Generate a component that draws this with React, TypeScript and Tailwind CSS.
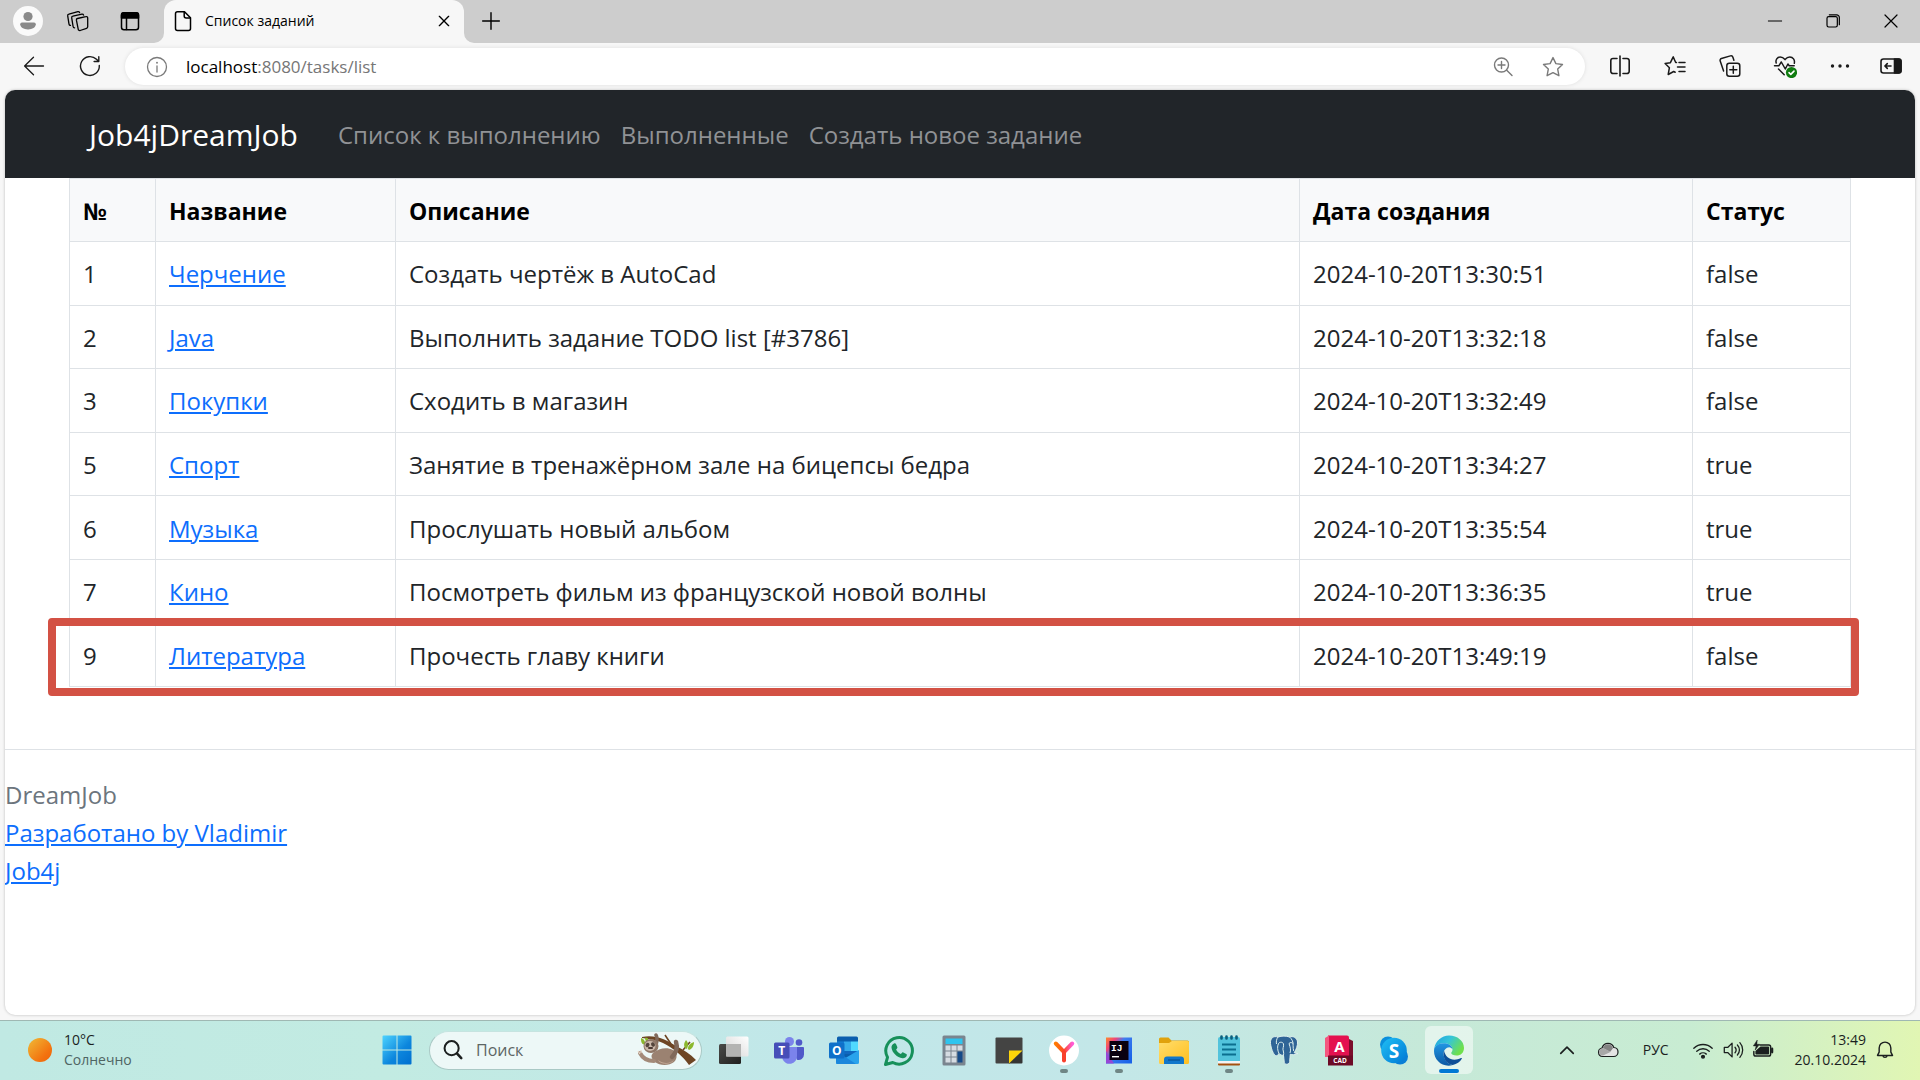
import type { ReactNode } from "react";

type Task = {
  id: number;
  title: string;
  description: string;
  created: string;
  done: boolean;
};

const TASKS: Task[] = [
  { id: 1, title: "Черчение", description: "Создать чертёж в AutoCad", created: "2024-10-20T13:30:51", done: false },
  { id: 2, title: "Java", description: "Выполнить задание TODO list [#3786]", created: "2024-10-20T13:32:18", done: false },
  { id: 3, title: "Покупки", description: "Сходить в магазин", created: "2024-10-20T13:32:49", done: false },
  { id: 5, title: "Спорт", description: "Занятие в тренажёрном зале на бицепсы бедра", created: "2024-10-20T13:34:27", done: true },
  { id: 6, title: "Музыка", description: "Прослушать новый альбом", created: "2024-10-20T13:35:54", done: true },
  { id: 7, title: "Кино", description: "Посмотреть фильм из французской новой волны", created: "2024-10-20T13:36:35", done: true },
  { id: 9, title: "Литература", description: "Прочесть главу книги", created: "2024-10-20T13:49:19", done: false },
];

function Line({ size = "size-6", width = 1.3, children }: { size?: string; width?: number; children: ReactNode }) {
  return (
    <svg
      viewBox="0 0 24 24"
      className={`${size} shrink-0`}
      fill="none"
      stroke="currentColor"
      strokeWidth={width}
      strokeLinecap="round"
      strokeLinejoin="round"
      aria-hidden="true"
    >
      {children}
    </svg>
  );
}

function ToolButton({ label, className = "w-[55px]", children }: { label: string; className?: string; children: ReactNode }) {
  return (
    <button type="button" aria-label={label} className={`${className} flex h-full shrink-0 items-center justify-center pb-0.5`}>
      {children}
    </button>
  );
}

function TitleBar() {
  return (
    <header className="flex h-[43px] bg-[#cdcdcd] text-black">
      <ToolButton label="Профиль" className="w-14">
        <svg viewBox="0 0 30 30" className="size-[30px]" aria-hidden="true">
          <circle cx="15" cy="15" r="15" fill="#fafafa" />
          <circle cx="15" cy="10.5" r="4.6" fill="#8a8a8a" />
          <path d="M9 16.5h12a1.8 1.8 0 0 1 1.8 1.8c0 3-3.4 5.2-7.8 5.2s-7.8-2.2-7.8-5.2A1.8 1.8 0 0 1 9 16.5z" fill="#8a8a8a" />
        </svg>
      </ToolButton>
      <ToolButton label="Рабочие области" className="w-11">
        <Line>
          <path d="M11.5 9.5l8.3-1.9a1.5 1.5 0 0 1 1.9 1.4v8.8a1.6 1.6 0 0 1-1.1 1.5l-6.5 2.2a1.5 1.5 0 0 1-1.9-1.3L10.4 11.2A1.5 1.5 0 0 1 11.5 9.5z" />
          <path d="M8.6 18.8a1.5 1.5 0 0 1-1.5-1.3L5.7 8.9a1.5 1.5 0 0 1 1.2-1.7l9-2.1a1.5 1.5 0 0 1 1.7 1" />
          <path d="M4.5 16.4a1.5 1.5 0 0 1-1.5-1.3L1.7 6.9a1.5 1.5 0 0 1 1.2-1.7l9-2.6a1.5 1.5 0 0 1 1.7 1" />
        </Line>
      </ToolButton>
      <ToolButton label="Меню вкладок" className="w-[60px]">
        <Line width={1.5}>
          <rect x="3.5" y="3.8" width="17" height="17" rx="2.5" />
          <path d="M3.5 9V6.3A2.5 2.5 0 0 1 6 3.8h12a2.5 2.5 0 0 1 2.5 2.5V9z" fill="currentColor" />
          <path d="M8.5 9v11.5" />
        </Line>
      </ToolButton>
      <div className="relative ml-1 flex w-[300px] items-center rounded-t-xl bg-[#f7f7f7] pr-2 pb-0.5 pl-[7px]">
        <svg viewBox="0 0 10 10" className="absolute bottom-0 -left-2.5 size-2.5" aria-hidden="true">
          <path d="M10 0v10H0A10 10 0 0 0 10 0z" fill="#f7f7f7" />
        </svg>
        <svg viewBox="0 0 10 10" className="absolute -right-2.5 bottom-0 size-2.5" aria-hidden="true">
          <path d="M0 0v10h10A10 10 0 0 1 0 0z" fill="#f7f7f7" />
        </svg>
        <Line width={1.5}>
          <path d="M6.5 2.7h7l6 6v10.8a2 2 0 0 1-2 2h-11a2 2 0 0 1-2-2V4.7a2 2 0 0 1 2-2z" />
          <path d="M13.2 2.9v4.2a2 2 0 0 0 2 2h4" />
        </Line>
        <span className="ml-2.5 flex-1 text-sm">Список заданий</span>
        <button type="button" aria-label="Закрыть вкладку" className="flex size-6 items-center justify-center">
          <Line size="size-4" width={2}>
            <path d="M5 5l14 14M19 5L5 19" />
          </Line>
        </button>
      </div>
      <ToolButton label="Новая вкладка" className="w-[54px]">
        <Line size="size-5" width={1.7}>
          <path d="M12 2v20M2 12h20" />
        </Line>
      </ToolButton>
      <div className="ml-auto flex">
        <ToolButton label="Свернуть" className="w-[58px]">
          <Line size="size-4" width={1.5}><path d="M2 12h20" /></Line>
        </ToolButton>
        <ToolButton label="Восстановить" className="w-[58px]">
          <Line size="size-4" width={1.8}>
            <rect x="3" y="5.5" width="15.5" height="15.5" rx="2.5" />
            <path d="M6.5 2.7h11a4 4 0 0 1 4 4v10.8" />
          </Line>
        </ToolButton>
        <ToolButton label="Закрыть" className="w-[58px]">
          <Line size="size-4" width={1.8}><path d="M3 3l18 18M21 3L3 21" /></Line>
        </ToolButton>
      </div>
    </header>
  );
}

function AddressBar() {
  return (
    <div className="flex h-[47px] items-center bg-[#f7f7f7] pr-[5px] pl-1.5 text-[#1a1a1a]">
      <ToolButton label="Назад" className="w-14">
        <Line><path d="M21.5 12H2.8M11.5 3.3L2.6 12l8.9 8.7" /></Line>
      </ToolButton>
      <ToolButton label="Обновить" className="w-14">
        <Line width={1.4}>
          <path d="M21.3 11.5a9.4 9.4 0 1 1-2.8-6.2L20.8 7.5M20.8 2.8v4.7h-4.7" />
        </Line>
      </ToolButton>
      <div className="mx-[7px] flex h-[37px] flex-1 items-center rounded-full bg-white pr-5 pl-5 text-[#7a7a7a] shadow-[0_0_4px_rgba(0,0,0,0.1)]">
        <Line width={1.3}>
          <circle cx="12" cy="12" r="9.5" />
          <path d="M12 11v6" />
          <path d="M12 7.6v.2" strokeWidth="1.8" />
        </Line>
        <a href="http://localhost:8080/tasks/list" className="ml-[17px] flex-1 text-[17px] leading-6 text-[#767676]">
          <span className="text-black">localhost</span>:8080/tasks/list
        </a>
        <button type="button" aria-label="Масштаб" className="mr-[26px]">
          <Line width={1.4}>
            <circle cx="10.5" cy="10" r="7" />
            <path d="M15.7 15.2l5.3 5.3M10.5 6.5v7M7 10h7" />
          </Line>
        </button>
        <button type="button" aria-label="Добавить в избранное">
          <Line width={1.4}>
            <path d="M12 2.6l2.9 6 6.6.9-4.8 4.6 1.2 6.6L12 17.6l-5.9 3.1 1.2-6.6-4.8-4.6 6.6-.9z" />
          </Line>
        </button>
      </div>
      <ToolButton label="Разделить экран">
        <Line width={1.6}>
          <path d="M9 4.5H5a2.2 2.2 0 0 0-2.2 2.2v10.6A2.2 2.2 0 0 0 5 19.5h4M15 4.5h4a2.2 2.2 0 0 1 2.2 2.2v10.6a2.2 2.2 0 0 1-2.2 2.2h-4M12 2v20" />
        </Line>
      </ToolButton>
      <ToolButton label="Избранное">
        <Line width={1.5}>
          <path d="M13.5 8.5h-.8L10.2 2.9 7.4 8.7l-5.3.8 4.3 4.2-1.2 6.8 5.5-3 1.5.7M16 8.5h6M14.5 13h7.5M16 17.5h6" />
        </Line>
      </ToolButton>
      <ToolButton label="Коллекции">
        <Line width={1.5}>
          <rect x="8.8" y="9.3" width="13" height="13" rx="2.5" />
          <path d="M15.3 12.3v7M11.8 15.8h7M5.6 17L2.2 7.1a2 2 0 0 1 1.2-2.6l9-2.6a2 2 0 0 1 2.5 1.3l1 3" />
        </Line>
      </ToolButton>
      <ToolButton label="Основные компоненты браузера">
        <Line width={1.5}>
          <path d="M3.2 9C2.3 5.8 4.2 3 7.2 3c2.2 0 3.6 1.2 4.8 2.6C13.2 4.2 14.6 3 16.8 3c3.2 0 5.3 2.9 4.5 6.2M1.5 11.8h4.3L8.3 8l4 7 2.6-5 1.3 1.800h5M5.5 15l5.7 5.8" />
          <circle cx="18.5" cy="18.5" r="5.6" fill="#107c10" stroke="none" />
          <path d="M16 18.7l1.8 1.7 3.2-3.3" stroke="#fff" strokeWidth="1.6" />
        </Line>
      </ToolButton>
      <ToolButton label="Настройки и другое">
        <svg viewBox="0 0 24 24" className="size-6" fill="currentColor" aria-hidden="true">
          <circle cx="4.5" cy="12" r="1.7" />
          <circle cx="12" cy="12" r="1.7" />
          <circle cx="19.5" cy="12" r="1.7" />
        </svg>
      </ToolButton>
      <ToolButton label="Боковая панель" className="w-12">
        <Line width={1.6}>
          <rect x="2" y="5" width="20" height="14" rx="2.5" />
          <path d="M15.5 5h4A2.5 2.5 0 0 1 22 7.5v9a2.5 2.5 0 0 1-2.5 2.5h-4z" fill="currentColor" />
          <path d="M12 12H6M8.3 9.6L5.9 12l2.4 2.4" />
        </Line>
      </ToolButton>
    </div>
  );
}

function Navbar() {
  return (
    <nav className="flex h-[88px] items-center bg-[#212529] pt-0.5 pl-[84px] text-2xl text-[#909295]">
      <a href="#home" className="mr-10 text-[30px] text-white">Job4jDreamJob</a>
      <div className="flex gap-5">
        <a href="#todo">Список к выполнению</a>
        <a href="#done">Выполненные</a>
        <a href="#create">Создать новое задание</a>
      </div>
    </nav>
  );
}

function TaskTable() {
  return (
    <div className="relative mx-16">
      <table className="h-[509px] w-full table-fixed border-collapse text-left text-2xl text-[#212529] [&_td]:border [&_td]:border-[#dee2e6] [&_td]:px-[13px] [&_td]:pt-0.5 [&_th]:border [&_th]:border-[#dee2e6] [&_th]:px-[13px] [&_th]:pt-0.5">
        <colgroup>
          <col className="w-[86px]" />
          <col className="w-[240px]" />
          <col />
          <col className="w-[393px]" />
          <col className="w-[158px]" />
        </colgroup>
        <thead className="bg-[#f8f9fa] text-[23px] leading-8 text-black">
          <tr className="h-[63px]">
            <th scope="col">№</th>
            <th scope="col">Название</th>
            <th scope="col">Описание</th>
            <th scope="col">Дата создания</th>
            <th scope="col">Статус</th>
          </tr>
        </thead>
        <tbody>
          {TASKS.map((task) => (
            <tr key={task.id}>
              <td>{task.id}</td>
              <td>
                <a href={`#task-${task.id}`} className="text-[#0d6efd] underline">{task.title}</a>
              </td>
              <td>{task.description}</td>
              <td>{task.created}</td>
              <td>{String(task.done)}</td>
            </tr>
          ))}
        </tbody>
      </table>
      <div className="pointer-events-none absolute -right-2 -bottom-[9px] -left-[21px] h-[78px] rounded-[4px] border-8 border-[#d35144]" />
    </div>
  );
}

function PageFooter() {
  return (
    <footer className="mt-[62px] border-t border-[#dee2e6] pt-[26px] text-2xl leading-[38px] text-[#0d6efd]">
      <p className="text-[#6c757d]">DreamJob</p>
      <p><a href="#author" className="underline">Разработано by Vladimir</a></p>
      <p><a href="#job4j" className="underline">Job4j</a></p>
    </footer>
  );
}

function Sloth() {
  return (
    <svg viewBox="0 0 60 34" className="h-[34px] w-[60px]" aria-hidden="true">
      <path d="M5 4C18 1 30 7 39 13c8 4 14 8 20 14l-7 5C46 23 36 15 26 10 18 6 10 6 5 5z" fill="#6d4524" />
      <path d="M28 2l6 9M46 17l7-8" stroke="#6d4524" strokeWidth="1.6" />
      <path d="M48 15c-2-4 0-6 1-8 3 3 2 6 1 9zM51 16c0-4 3-6 6-7 0 4-2 7-5 8zM4 5c3 1 5 4 4 7C4 11 4 8 4 5zM8 5c3-1 4 1 3 4-2 0-3-2-3-4z" fill="#8bb82e" />
      <path d="M16 20c6-5 14-6 20-3 4 3 5 8 1 12-5 4-14 4-19 0-3-3-5-6-2-9z" fill="#9b8271" />
      <path d="M21 27c5 4 12 4 16 0-3 5-14 5-16 0z" fill="#c5aa98" />
      <path d="M35 24c4-4 6-9 4-15" fill="none" stroke="#80695a" strokeWidth="4.5" strokeLinecap="round" />
      <path d="M19 12c1-4 2-7 0-10" fill="none" stroke="#80695a" strokeWidth="3.5" strokeLinecap="round" />
      <path d="M17 28C11 28 6 26 3 20" fill="none" stroke="#a38a79" strokeWidth="4" strokeLinecap="round" />
      <path d="M1 18l2 3M4 17l0 3" stroke="#e8dacb" strokeWidth="1.2" />
      <ellipse cx="14" cy="13" rx="7.5" ry="7" fill="#8f7767" />
      <ellipse cx="13" cy="13" rx="5.5" ry="5" fill="#cbb9ab" />
      <ellipse cx="10.5" cy="12" rx="1.8" ry="2.4" fill="#54453c" transform="rotate(30 10.5 12)" />
      <ellipse cx="16" cy="11.5" rx="1.8" ry="2.4" fill="#54453c" transform="rotate(-30 16 11.5)" />
      <path d="M12 15h3" stroke="#4a3a34" strokeWidth="2" strokeLinecap="round" />
    </svg>
  );
}

type AppEntry = { name: string; running?: boolean; active?: boolean; icon: ReactNode };

const GLYPH_FONT = "'Open Sans', sans-serif";

const APPS: AppEntry[] = [
  {
    name: "Представление задач",
    icon: (
      <>
        <defs>
          <linearGradient id="tvDark" x1="0" y1="0" x2="1" y2="1"><stop stopColor="#4a4a48" /><stop offset="1" stopColor="#20201f" /></linearGradient>
          <linearGradient id="tvLight" x1="1" y1="0" x2="0" y2="1"><stop stopColor="#fff" /><stop offset="1" stopColor="#d5d5d5" /></linearGradient>
        </defs>
        <rect x="1" y="9" width="22" height="20" rx="1.5" fill="url(#tvDark)" />
        <rect x="8" y="1.5" width="22.5" height="20" rx="1.5" fill="url(#tvLight)" />
        <rect x="8" y="9" width="15" height="12.5" fill="#b3b3b2" />
      </>
    ),
  },
  {
    name: "Microsoft Teams",
    icon: (
      <>
        <circle cx="26" cy="7.5" r="3.3" fill="#5059c9" />
        <path d="M19 12h11a1 1 0 0 1 1 1v6.5a5.5 5.5 0 0 1-7 5.3z" fill="#5059c9" />
        <circle cx="16.5" cy="6.5" r="4.5" fill="#7b83eb" />
        <path d="M10 12h14v9a7.5 7.5 0 0 1-14.5 3z" fill="#7b83eb" />
        <rect x="1" y="7.5" width="15.5" height="16" rx="1.5" fill="#464eb8" />
        <text x="8.7" y="20" textAnchor="middle" fontFamily={GLYPH_FONT} fontWeight="700" fontSize="12" fill="#fff">T</text>
      </>
    ),
  },
  {
    name: "Outlook",
    icon: (
      <>
        <rect x="9" y="1.5" width="21" height="22" rx="1.5" fill="#0a5eae" />
        <path d="M9 6.5h7V16H9z" fill="#1581d8" />
        <path d="M16 6.5h7V16h-7z" fill="#33a9ea" />
        <path d="M23 6.5h7V16h-7z" fill="#50d9ff" />
        <path d="M9 16h21v3H9z" fill="#1068bf" />
        <path d="M31 15L8 28.5a1.5 1.5 0 0 0 1 .5h20.5A1.5 1.5 0 0 0 31 27.5z" fill="#29a3ec" />
        <path d="M8 16l20 13H9a1.5 1.5 0 0 1-1-1.5z" fill="#1b87dc" />
        <rect x="1" y="7.5" width="15.5" height="16" rx="1.5" fill="#0f70c9" />
        <text x="8.7" y="20" textAnchor="middle" fontFamily={GLYPH_FONT} fontWeight="700" fontSize="12" fill="#fff">O</text>
      </>
    ),
  },
  {
    name: "WhatsApp",
    icon: (
      <>
        <path d="M2.5 29.5l2-7.2A13.3 13.3 0 1 1 9.8 27.5z" fill="none" stroke="#17905a" strokeWidth="3" strokeLinejoin="round" />
        <path d="M11 8.5c.7-.5 1.6-.4 2 .4l1.3 3c.3.7 0 1.2-1.2 2.6 1 2 2.6 3.6 4.8 4.6 1.2-1.5 1.7-2 2.4-1.6l3 1.5c.6.4.6.9.4 1.7-.5 1.7-2.3 2.7-4.2 2.5-5.5-.7-10.3-5.5-11-10.5-.2-1.7.8-3.2 2.5-4.2z" fill="#17905a" />
      </>
    ),
  },
  {
    name: "Калькулятор",
    icon: (
      <>
        <rect x="4.5" y=".5" width="23" height="30" rx="1.5" fill="#7a858f" />
        <rect x="7.5" y="3.5" width="17" height="5.5" fill="#2ec4ee" />
        <path d="M7.5 10.5h5v5h-5zM13.5 10.5h5v5h-5zM19.5 10.5h5v5h-5zM7.5 16.5h5v5h-5zM13.5 16.5h5v5h-5zM7.5 22.5h5v5h-5zM13.5 22.5h5v5h-5z" fill="#d6dce2" />
        <path d="M19.5 16.5h5v11h-5z" fill="#164a88" />
      </>
    ),
  },
  {
    name: "Записки",
    icon: (
      <>
        <path d="M3.5 2.5h25a1 1 0 0 1 1 1V16L16.5 28.5h-13a1 1 0 0 1-1-1v-24a1 1 0 0 1 1-1z" fill="#444443" />
        <path d="M29.5 15.5v12a1 1 0 0 1-1 1h-13z" fill="#353534" />
        <path d="M16 15.5h13.5L16 28.5z" fill="#ffd60a" />
      </>
    ),
  },
  {
    name: "Яндекс Браузер",
    running: true,
    icon: (
      <>
        <defs>
          <linearGradient id="ya" x1="0" y1="0" x2="1" y2="0"><stop stopColor="#ff7a00" /><stop offset=".5" stopColor="#fb4a2a" /><stop offset="1" stopColor="#ff5bd5" /></linearGradient>
        </defs>
        <circle cx="16" cy="15.5" r="15" fill="#fff" />
        <path d="M7.8 8.5L16 17l8.2-8.5" fill="none" stroke="url(#ya)" strokeWidth="4" strokeLinecap="round" strokeLinejoin="round" />
        <path d="M16 17v8.5" stroke="#f8402c" strokeWidth="4" strokeLinecap="round" />
      </>
    ),
  },
  {
    name: "IntelliJ IDEA",
    running: true,
    icon: (
      <>
        <defs>
          <linearGradient id="ij" x1="0" y1="0" x2="1" y2=".8"><stop stopColor="#fe8a2c" /><stop offset=".25" stopColor="#f0437a" /><stop offset=".45" stopColor="#3f7df0" /><stop offset="1" stopColor="#1a63e8" /></linearGradient>
        </defs>
        <rect x="3" y="2.5" width="26" height="26" fill="url(#ij)" />
        <path d="M3 16l8 12.5H3z" fill="#9547d6" />
        <rect x="6.5" y="6" width="19" height="19" fill="#0a0010" />
        <text x="8" y="15.5" fontFamily="'Liberation Mono', monospace" fontWeight="700" fontSize="9.5" fill="#fff">IJ</text>
        <rect x="9" y="21" width="7" height="1.4" fill="#fff" />
      </>
    ),
  },
  {
    name: "Проводник",
    icon: (
      <>
        <defs>
          <linearGradient id="fd" x1="0" y1="0" x2="1" y2="1"><stop stopColor="#ffdd6c" /><stop offset="1" stopColor="#ffbf1f" /></linearGradient>
        </defs>
        <path d="M1 4a1.5 1.5 0 0 1 1.5-1.5h8L13.5 5.5h16A1.5 1.5 0 0 1 31 7v8H1z" fill="#e0a20d" />
        <path d="M1 8h10l3-2h15.5A1.5 1.5 0 0 1 31 7.5v20a1.5 1.5 0 0 1-1.5 1.5h-27A1.5 1.5 0 0 1 1 27.5z" fill="url(#fd)" />
        <path d="M6 29v-4.5a3 3 0 0 1 3-3h14a3 3 0 0 1 3 3V29z" fill="#1177cb" />
        <path d="M10 25h12" stroke="#0a4f90" strokeWidth="1.2" />
      </>
    ),
  },
  {
    name: "Блокнот",
    running: true,
    icon: (
      <>
        <rect x="5" y="24" width="22" height="6.5" rx="1" fill="#a4500f" />
        <rect x="5" y="24" width="22" height="4.5" fill="#f3f3f3" />
        <path d="M5 4a2 2 0 0 1 2-2h18a2 2 0 0 1 2 2v22H5z" fill="#52c3dc" />
        <path d="M9 9.5h14M9 14.5h14M9 19.5h14" stroke="#0b6f8f" strokeWidth="1.8" />
        <path d="M8.5 1.5v2M13.5 1.5v2M18.5 1.5v2M23.5 1.5v2" stroke="#0b5f7d" strokeWidth="2.6" strokeLinecap="round" />
      </>
    ),
  },
  {
    name: "PostgreSQL",
    icon: (
      <g stroke="#dff1ee" strokeWidth="1" strokeLinejoin="round">
        <path d="M10 2C5 .5 2 3.5 2.5 8.5 3 13 5 19 7.5 20.5c1.5.8 2.5-.5 3.5-2 1 1.5 3 2 4.5 1.7.5 2.3.3 5 .8 7.3.6 2.5 5 2.5 5.4-1 .3-2.5.2-5 .6-7.3C24 20 27.5 20 30 18.5c-1.5 0-3-.2-3.8-.8 2-3 3.6-7.2 3.3-10.7C29 2.5 25 .8 21.5 2 18 .8 14 .8 10 2z" fill="#2f6496" />
        <path d="M11 18.5c-1.5-3-2-7-.5-10 1.5-2 4.5-1.5 5 .5.6 2.6-1.3 4.5-.2 7 .5 1.5.5 3 .2 4.2M21.5 2c2.5 2 4 5 3.6 8.5-.2 2.2.4 4 .6 5.5M21 8.5c1.5-1.5 3-1 4 0M22 18c1-3 .5-5-1-9.5M10 2C8.5 4 8 6.5 8.5 9" fill="none" />
      </g>
    ),
  },
  {
    name: "AutoCAD",
    icon: (
      <>
        <path d="M5 .5h19a2 2 0 0 1 2 2v20H5z" fill="#e4114f" />
        <path d="M2 22V3l4-2.5V22z" fill="#f4567f" />
        <path d="M26 4l4 2v24h-4z" fill="#7c0d2c" />
        <rect x="5" y="20.5" width="25" height="10" fill="#6d0a26" />
        <text x="16.5" y="17" textAnchor="middle" fontFamily={GLYPH_FONT} fontWeight="700" fontSize="15" fill="#fff">A</text>
        <text x="17" y="28.3" textAnchor="middle" fontFamily={GLYPH_FONT} fontWeight="700" fontSize="6.5" fill="#fff">CAD</text>
      </>
    ),
  },
  {
    name: "Skype",
    icon: (
      <>
        <defs>
          <linearGradient id="sk" x1="0" y1="0" x2="1" y2="1"><stop stopColor="#20c0f5" /><stop offset="1" stopColor="#0078d4" /></linearGradient>
        </defs>
        <circle cx="10" cy="9.5" r="8" fill="#0a8fdc" />
        <circle cx="22" cy="21.5" r="8" fill="#0b7fd6" />
        <circle cx="16" cy="15.5" r="12.8" fill="url(#sk)" />
        <text x="16" y="22.5" textAnchor="middle" fontFamily={GLYPH_FONT} fontWeight="700" fontSize="19" fill="#fff">S</text>
      </>
    ),
  },
  {
    name: "Microsoft Edge",
    active: true,
    icon: (
      <>
        <defs>
          <linearGradient id="edTop" x1="0" y1="0" x2="1" y2=".5"><stop stopColor="#1d9fe0" /><stop offset=".5" stopColor="#35c5d8" /><stop offset="1" stopColor="#6fe04c" /></linearGradient>
          <linearGradient id="edMid" x1="0" y1="0" x2="0" y2="1"><stop stopColor="#2196e3" /><stop offset="1" stopColor="#0c59a4" /></linearGradient>
        </defs>
        <path d="M1.2 13.5C2.5 6 8.6.5 16 .5c8.5 0 15 5.5 15 12.5 0 4.5-3.2 7.6-7.5 7.6-3 0-5.3-1-5.3-2.5 0-1 1.3-1.4 1.3-3.7 0-3.4-3.8-6.1-8.5-6.1-4.2 0-7.8 2-9.8 5.2z" fill="url(#edTop)" />
        <path d="M1.2 13.5C3 10.2 6.5 8.3 11 8.3c4.7 0 8.5 2.7 8.5 6-1.3-2-3.3-2.6-5.5-1.5-3.5 2-4.5 6-2.5 10.2 1.5 3.5 4.5 6.5 8.3 7C10 33 1 25.5 1 16z" fill="url(#edMid)" />
        <path d="M11 15.5c-2 6 2 14 8.8 14.5 4-.8 7.2-3 9-6.2.3-.6-.2-1-.8-.7C20 27 12.5 23.5 11 15.5z" fill="#0e4f97" />
      </>
    ),
  },
];

function TaskbarApp({ name, running, active, icon }: AppEntry) {
  return (
    <button type="button" aria-label={name} className="relative flex h-full w-[55px] shrink-0 items-center justify-center">
      <span className={active ? "flex size-12 items-center justify-center rounded-md bg-white/50" : "flex size-12 items-center justify-center"}>
        <svg viewBox="0 0 32 31" className="h-[31px] w-8" aria-hidden="true">{icon}</svg>
      </span>
      {running && <span className="absolute bottom-1.5 h-1 w-2 rounded-full bg-[#6f8685]" />}
      {active && <span className="absolute bottom-1.5 h-1 w-5 rounded-full bg-[#0078d4]" />}
    </button>
  );
}

function Taskbar() {
  return (
    <footer className="flex h-[60px] items-center border-t border-[#9fb8b3] bg-[linear-gradient(to_right,#c0e9e3_0%,#c2ebe2_20%,#c1e7e9_42%,#c3e7e8_58%,#c6e9d8_75%,#c8ecd2_88%,#e1f6b3_100%)] pb-px text-[#1b1f1f]">
      <button type="button" className="flex w-[369px] shrink-0 items-center gap-3 pl-7 text-left">
        <svg viewBox="0 0 24 24" className="size-6" aria-hidden="true">
          <defs>
            <linearGradient id="sun" x1="0" y1="0" x2="1" y2="1"><stop stopColor="#f0bb37" /><stop offset=".7" stopColor="#f3730f" /><stop offset="1" stopColor="#ee6208" /></linearGradient>
          </defs>
          <circle cx="12" cy="12" r="12" fill="url(#sun)" />
        </svg>
        <span className="flex flex-col text-sm leading-5">
          <span>10°C</span>
          <span className="text-[#4f6563]">Солнечно</span>
        </span>
      </button>
      <button type="button" aria-label="Пуск" className="flex w-[55px] shrink-0 justify-center">
        <svg viewBox="0 0 30 30" className="size-[30px]" aria-hidden="true">
          <defs>
            <linearGradient id="win" x1="0" y1="0" x2="29" y2="29" gradientUnits="userSpaceOnUse"><stop stopColor="#4fd5ff" /><stop offset=".6" stopColor="#0c86dd" /><stop offset="1" stopColor="#0070d0" /></linearGradient>
          </defs>
          <path d="M1.5.5h13v14h-14v-13a1 1 0 0 1 1-1zM15.5.5h13a1 1 0 0 1 1 1v13h-14zM.5 15.5h14v14h-13a1 1 0 0 1-1-1zM15.5 15.5h14v13a1 1 0 0 1-1 1h-13z" fill="url(#win)" />
        </svg>
      </button>
      <label className="mr-1 ml-[5px] flex h-[39px] w-[273px] shrink-0 items-center rounded-full border border-[#a9c9c5] border-t-[#c6e4e0] bg-[#edf8f7] pr-1 pl-3">
        <Line size="size-[22px]" width={2.2}>
          <circle cx="10.5" cy="10" r="7.7" />
          <path d="M16.5 16l4.5 4.8" strokeWidth="2.8" />
        </Line>
        <input type="text" aria-label="Поиск" placeholder="Поиск" className="ml-3 w-0 flex-1 bg-transparent text-base outline-none placeholder:text-[#5c6564]" />
        <Sloth />
      </label>
      <div className="flex h-full">
        {APPS.map((app) => (
          <TaskbarApp key={app.name} {...app} />
        ))}
      </div>
      <div className="ml-auto flex items-center pr-[25px]">
        <button type="button" aria-label="Показать скрытые значки" className="mr-5">
          <Line size="size-5" width={2}><path d="M4.5 16l7.5-7.5 7.5 7.5" /></Line>
        </button>
        <svg viewBox="0 0 22 16" className="mr-6 h-4 w-[22px]" aria-label="OneDrive" role="img">
          <path d="M5.5 14.5A4.3 4.3 0 0 1 5 6c1-3 3.5-4.7 6-4.7 3 0 5 1.7 5.8 4.2 2.5.2 4.2 2.2 4.2 4.5s-1.8 4.5-4.3 4.5z" fill="#e4e4e4" stroke="#1b1f1f" strokeWidth="1.2" />
          <path d="M2 9c1-2.7 4-3.3 6-2l5.5 3L6 13.5C3.5 14 1.5 11.5 2 9z" fill="#a8a8a8" />
          <path d="M5.8 6C7 1.5 14.5.5 16 6.2l-2.8 3.6L8 7z" fill="#828282" />
        </svg>
        <span className="mr-[23px] text-sm">РУС</span>
        <div className="mr-[21px] flex gap-2">
          <Line size="size-[22px]" width={1.5}>
            <path d="M2 10a14.5 14.5 0 0 1 20 0M5.2 13.3a10 10 0 0 1 13.6 0M8.4 16.5a5.3 5.3 0 0 1 7.2 0" />
            <circle cx="12" cy="19.3" r="1.5" fill="currentColor" />
          </Line>
          <Line size="size-[22px]" width={1.4}>
            <path d="M2.5 9.2h3.7L11 4.5v15l-4.8-4.7H2.5zM14.2 9a4.7 4.7 0 0 1 0 6M16.8 6.5a8 8 0 0 1 0 11M19.5 4a12 12 0 0 1 0 16" />
          </Line>
          <Line size="size-[22px]" width={1.6}>
            <path d="M8.5 6.5h9.8A2 2 0 0 1 20.3 8.5v8a2 2 0 0 1-2 2H4a2 2 0 0 1-2-2v-3" />
            <path d="M9.5 9h8.3v7H4.5v-2.5z" fill="currentColor" />
            <path d="M22 10.5v4" strokeWidth="2.4" />
            <path d="M5.5 1.5L1.5 7.5h3l-1 4.5L8.2 5.8H5.5z" fill="currentColor" strokeWidth=".6" />
          </Line>
        </div>
        <time dateTime="2024-10-20T13:49" className="mr-[9px] text-right text-sm leading-5">
          13:49<br />20.10.2024
        </time>
        <button type="button" aria-label="Уведомления">
          <Line size="size-5" width={1.7}>
            <path d="M12 2.5a7 7 0 0 0-7 7v5L3 18.5h18L19 14.5v-5a7 7 0 0 0-7-7zM9.3 18.8a2.8 2.8 0 0 0 5.4 0" />
          </Line>
        </button>
      </div>
    </footer>
  );
}

export default function App() {
  return (
    <div className="flex min-h-screen flex-col bg-[#f7f7f7] font-['Open_Sans','Noto_Sans',sans-serif]">
      <TitleBar />
      <AddressBar />
      <main className="mx-[5px] mb-[5px] flex-1 overflow-hidden rounded-[10px] bg-white shadow-[0_0_3px_rgba(0,0,0,0.25)]">
        <Navbar />
        <TaskTable />
        <PageFooter />
      </main>
      <Taskbar />
    </div>
  );
}
